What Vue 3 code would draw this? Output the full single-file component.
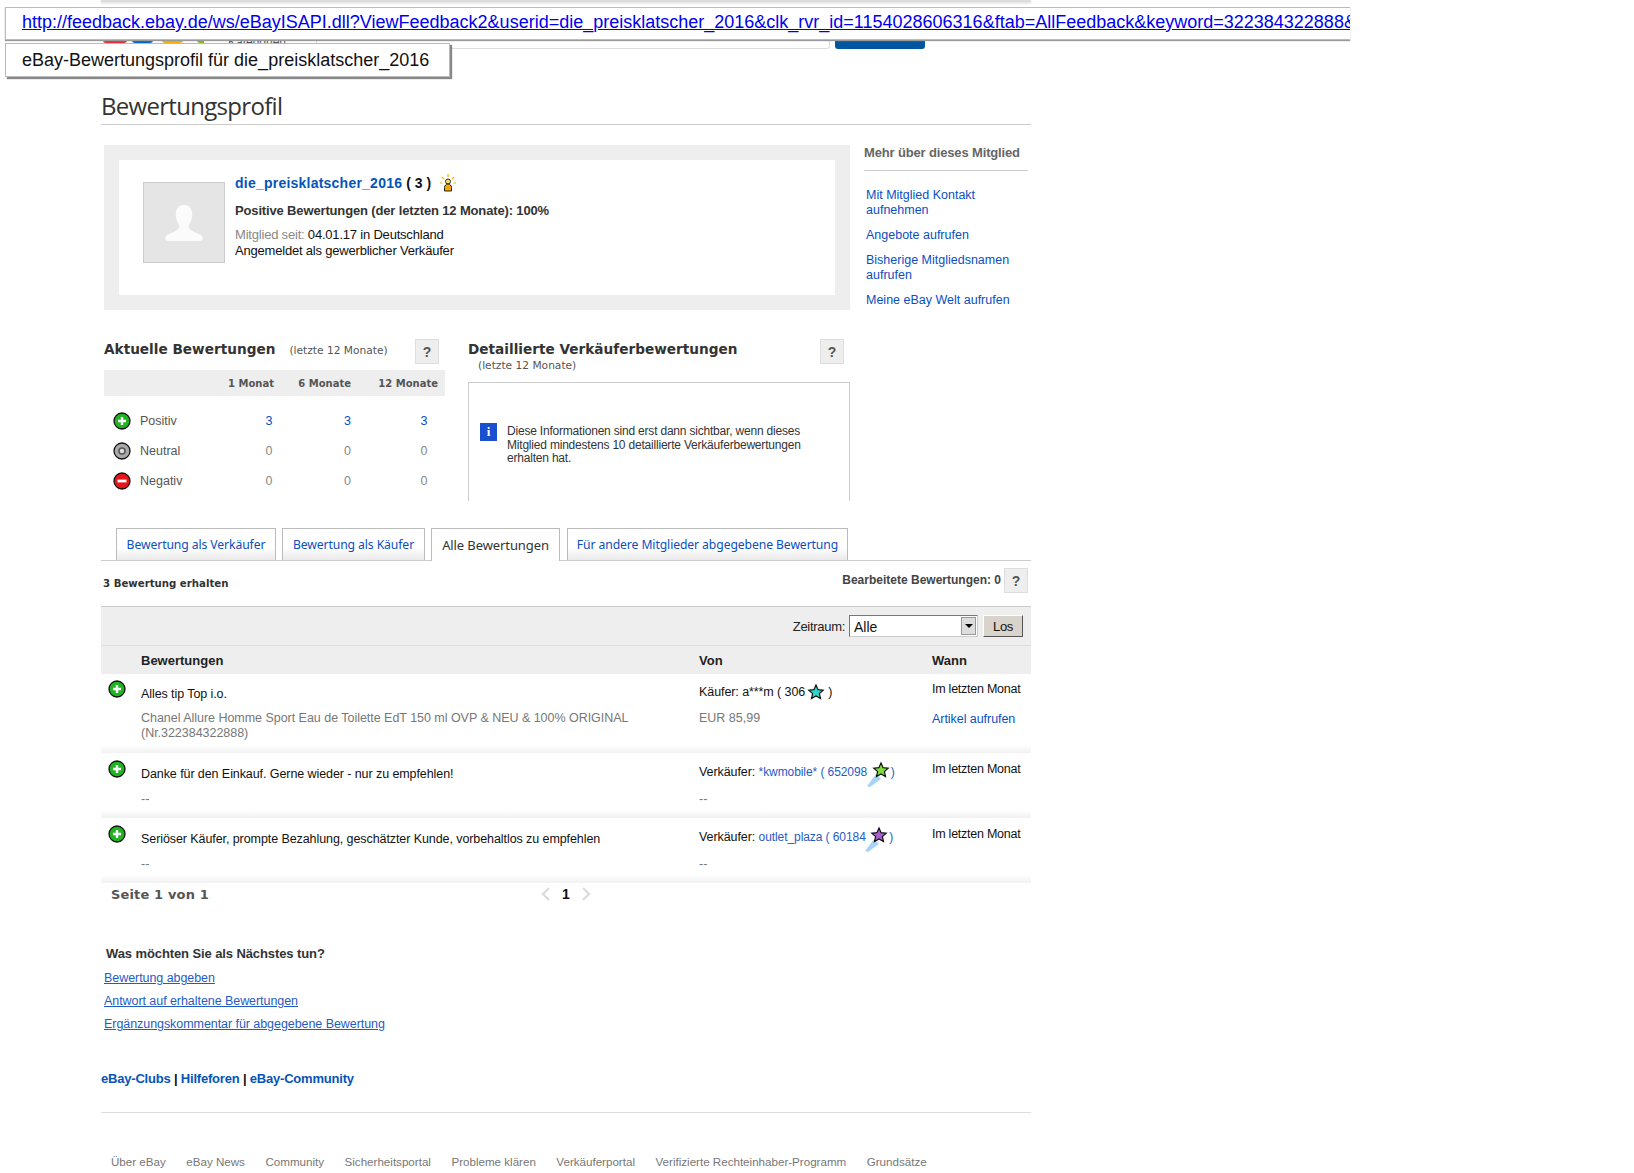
<script setup>
const rows = [
  { key: 'a', comment: 'Alles tip Top i.o.', item: 'Chanel Allure Homme Sport Eau de Toilette EdT 150 ml OVP & NEU & 100% ORIGINAL', item2: '(Nr.322384322888)', role: 'Käufer:', user: 'a***m', score: '306', link: false, color: '#2fd6c8', shooting: false, price: 'EUR 85,99', view: 'Artikel aufrufen', cls: 'row1' },
  { key: 'b', comment: 'Danke für den Einkauf. Gerne wieder - nur zu empfehlen!', item: '--', role: 'Verkäufer:', user: '*kwmobile*', score: '652098', link: true, color: '#7fdc3c', shooting: true, price: '--', cls: 'row2' },
  { key: 'c', comment: 'Seriöser Käufer, prompte Bezahlung, geschätzter Kunde, vorbehaltlos zu empfehlen', item: '--', role: 'Verkäufer:', user: 'outlet_plaza', score: '60184', link: true, color: '#a85fd0', shooting: true, price: '--', cls: 'row3' }
]
const summary = [
  { label: 'Positiv', kind: 'pos', vals: [3, 3, 3] },
  { label: 'Neutral', kind: 'neu', vals: [0, 0, 0] },
  { label: 'Negativ', kind: 'neg', vals: [0, 0, 0] }
]
const tabs = ['Bewertung als Verkäufer', 'Bewertung als Käufer', 'Alle Bewertungen', 'Für andere Mitglieder abgegebene Bewertung']
const footer = ['Über eBay', 'eBay News', 'Community', 'Sicherheitsportal', 'Probleme klären', 'Verkäuferportal', 'Verifizierte Rechteinhaber-Programm', 'Grundsätze']
const url = 'http://feedback.ebay.de/ws/eBayISAPI.dll?ViewFeedback2&userid=die_preisklatscher_2016&clk_rvr_id=1154028606316&ftab=AllFeedback&keyword=322384322888&sspagename=STRK'
</script>

<template>
  <div class="page">
    <div class="tip tip-url"><a class="tip-link">{{ url }}</a></div>
    <div class="tip tip-title">eBay-Bewertungsprofil für die_preisklatscher_2016</div>

    <div class="wrap">
      <header class="header">
        <div class="shadow"></div>
        <div class="head-row">
          <div class="logo"><i class="l-r"></i><i class="l-b"></i><i class="l-y"></i><i class="l-g"></i></div>
          <div class="cat">Kategorien</div>
          <div class="search"></div>
          <div class="search-btn"></div>
        </div>
      </header>

      <h1 class="title">Bewertungsprofil</h1>

      <section class="top">
        <div class="profile">
          <div class="profile-in">
            <div class="avatar">
              <svg width="42" height="38" viewBox="0 0 56 50"><path d="M28 1c8 0 11 6 11 13 0 6-3 11-5 15 0 3 3 6 10 9 6 2 9 4 9 7 0 3-2 4-5 4H8c-3 0-5-1-5-4 0-3 3-5 9-7 7-3 10-6 10-9-2-4-5-9-5-15C17 7 20 1 28 1z" fill="#fbfbfb"/></svg>
            </div>
            <div class="pinfo">
              <div class="pname"><a class="uname">die_preisklatscher_2016</a> <b>( 3 )</b>
                <svg class="sun" width="18" height="18" viewBox="0 0 18 18"><g stroke="#f5b400" stroke-width="1.2"><path d="M9 0v3M3 3l2 2M15 3l-2 2M1 9h2.500M17 9h-2.500"/></g><circle cx="9" cy="7.500" r="2.500" fill="#ffe27a" stroke="#222"/><path d="M5.500 17v-3.500c0-2 1.500-3.500 3.500-3.500s3.500 1.500 3.500 3.500V17z" fill="#f7a800" stroke="#222"/></svg>
              </div>
              <div class="ppos">Positive Bewertungen (der letzten 12 Monate): 100%</div>
              <div class="pmem"><span class="grey">Mitglied seit:</span> 04.01.17 in Deutschland</div>
              <div class="preg">Angemeldet als gewerblicher Verkäufer</div>
            </div>
          </div>
        </div>
        <aside class="side">
          <div class="side-h">Mehr über dieses Mitglied</div>
          <a class="slink s1">Mit Mitglied Kontakt<br>aufnehmen</a>
          <a class="slink">Angebote aufrufen</a>
          <a class="slink">Bisherige Mitgliedsnamen<br>aufrufen</a>
          <a class="slink">Meine eBay Welt aufrufen</a>
        </aside>
      </section>

      <section class="ratings">
        <div class="rleft">
          <div class="rhead">
            <h2 class="verd">Aktuelle Bewertungen</h2>
            <span class="small">(letzte 12 Monate)</span>
            <span class="help">?</span>
          </div>
          <div class="sumhead"><span></span><b>1 Monat</b><b>6 Monate</b><b>12 Monate</b></div>
          <div class="sumbody">
            <div v-for="s in summary" :key="s.label" class="sumrow">
              <span class="lab">
                <svg class="fb" width="18" height="18" viewBox="0 0 18 18">
                  <circle cx="9" cy="9" r="8" :fill="s.kind === 'pos' ? '#22b322' : s.kind === 'neg' ? '#e8141c' : '#a8a8a8'" stroke="#111" stroke-width="1.300"/>
                  <path v-if="s.kind === 'pos'" d="M9 5v8M5 9h8" stroke="#fff" stroke-width="2.400"/>
                  <path v-else-if="s.kind === 'neg'" d="M4.500 9h9" stroke="#fff" stroke-width="2.800"/>
                  <circle v-else cx="9" cy="9" r="3" fill="#ddd" stroke="#555" stroke-width="1.500"/>
                </svg>
                {{ s.label }}
              </span>
              <span v-for="(v, i) in s.vals" :key="i" class="num" :class="{ blue: v > 0, grey: v === 0 }">{{ v }}</span>
            </div>
          </div>
        </div>
        <div class="rright">
          <div class="rhead rhead2">
            <div>
              <h2 class="verd">Detaillierte Verkäuferbewertungen</h2>
              <div class="small small2">(letzte 12 Monate)</div>
            </div>
            <span class="help help2">?</span>
          </div>
          <div class="infobox">
            <span class="i-icon">i</span>
            <p>Diese Informationen sind erst dann sichtbar, wenn dieses<br>Mitglied mindestens 10 detaillierte Verkäuferbewertungen<br>erhalten hat.</p>
          </div>
        </div>
      </section>

      <nav class="tabs">
        <a v-for="(t, i) in tabs" :key="t" class="tab" :class="{ active: i === 2 }">{{ t }}</a>
      </nav>

      <div class="meta">
        <b class="meta-l">3 Bewertung erhalten</b>
        <span class="meta-r">Bearbeitete Bewertungen: 0</span>
        <span class="help help3">?</span>
      </div>

      <div class="filter">
        <span class="zeit">Zeitraum:</span>
        <span class="sel"><span class="sel-t">Alle</span><i class="sel-btn"></i></span>
        <span class="los">Los</span>
      </div>

      <div class="grid ghead"><span></span><b>Bewertungen</b><b>Von</b><b>Wann</b></div>

      <div v-for="r in rows" :key="r.key" class="grid frow" :class="r.cls">
        <svg class="fb ficon" width="18" height="18" viewBox="0 0 18 18"><circle cx="9" cy="9" r="8" fill="#22b322" stroke="#111" stroke-width="1.300"/><path d="M9 5v8M5 9h8" stroke="#fff" stroke-width="2.400"/></svg>
        <div>
          <div class="cmt">{{ r.comment }}</div>
          <div class="item">{{ r.item }}<template v-if="r.item2"><br>{{ r.item2 }}</template></div>
        </div>
        <div>
          <div class="from">
            {{ r.role }} <a v-if="r.link" class="flink">{{ r.user }}</a><template v-else>{{ r.user }}</template>
            <span :class="{ blue2: r.link }"> ( {{ r.score }}</span>
            <svg class="star" :class="{ shoot: r.shooting }" width="24" height="26" viewBox="0 0 24 26">
              <path v-if="r.shooting" d="M1 25 10 13l5 5L4 26z" fill="#a9d4f5"/>
              <path d="M15 2l2.100 4.700 5.100.5-3.800 3.400 1.100 5-4.500-2.600-4.500 2.600 1.100-5-3.800-3.400 5.100-.5z" :fill="r.color" stroke="#111" stroke-width="1.200"/>
            </svg>
            <span :class="{ blue2: r.link }">)</span>
          </div>
          <div class="price">{{ r.price }}</div>
        </div>
        <div>
          <div class="when">Im letzten Monat</div>
          <a v-if="r.view" class="view">{{ r.view }}</a>
        </div>
      </div>

      <div class="pager">
        <b class="pg-l">Seite 1 von 1</b>
        <span class="pg-c">
          <svg width="10" height="14" viewBox="0 0 10 14"><path d="M8 1 2 7l6 6" fill="none" stroke="#ddd" stroke-width="2.400"/></svg>
          <b>1</b>
          <svg width="10" height="14" viewBox="0 0 10 14"><path d="M2 1l6 6-6 6" fill="none" stroke="#ddd" stroke-width="2.400"/></svg>
        </span>
      </div>

      <section class="next">
        <h3>Was möchten Sie als Nächstes tun?</h3>
        <a>Bewertung abgeben</a>
        <a>Antwort auf erhaltene Bewertungen</a>
        <a>Ergänzungskommentar für abgegebene Bewertung</a>
      </section>

      <div class="clubs"><a>eBay-Clubs</a> | <a>Hilfeforen</a> | <a>eBay-Community</a></div>

      <footer class="foot">
        <a v-for="f in footer" :key="f">{{ f }}</a>
      </footer>
    </div>
  </div>
</template>

<style>
html, body { margin: 0; background: #fff; }
</style>

<style scoped>
.page { position: relative; width: 1634px; height: 1173px; overflow: hidden; font-family: "Liberation Sans", Arial, sans-serif; font-size: 13px; color: #111; background: #fff; }
a { color: #0a4fc0; text-decoration: none; }
.wrap { width: 930px; margin-left: 101px; }

.tip { position: absolute; left: 5px; z-index: 5; background: #fff; box-sizing: border-box; font-size: 18px; white-space: nowrap; overflow: hidden; border: 1px solid #bbb; }
.tip-url { top: 7px; width: 1345px; height: 33px; padding: 2px 0 0 16px; line-height: 24px; border-right: 0; box-shadow: 0 1px 1px #999; }
.tip-link { color: #0000ee; text-decoration: underline; }
.tip-title { top: 43px; width: 445px; height: 34px; padding: 4px 0 0 16px; line-height: 24px; color: #111; box-shadow: 2px 2px 1px #888; }

.header { position: relative; height: 49px; }
.shadow { height: 2px; background: #ddd; box-shadow: 0 1px 3px #ccc; }
.head-row { display: flex; align-items: flex-end; height: 47px; }
.logo { display: flex; width: 103px; height: 41px; padding-left: 2px; box-sizing: border-box; overflow: hidden; align-items: flex-end; align-self: flex-start; }
.logo i { display: block; height: 3px; border-radius: 0 0 12px 12px; flex: none; }
.l-r { width: 24px; background: #e53238; }
.l-b { width: 21px; margin-left: 5px; background: #0064d2; }
.l-y { width: 21px; margin-left: 9px; background: #f5af02; }
.l-g { width: 9px; margin-left: 14px; background: #86b817; }
.cat { width: 92px; height: 41px; margin-left: 20px; font-size: 12px; line-height: 81px; color: #555; padding-left: 4px; box-sizing: border-box; overflow: hidden; align-self: flex-start; }
.search { width: 514px; height: 10px; border: 1px solid #ddd; border-top: 0; box-sizing: border-box; border-radius: 0 0 3px 3px; }
.search-btn { width: 90px; height: 10px; margin-left: 5px; background: #00569f; border-radius: 0 0 3px 3px; }

.title { margin: 0; height: 76px; box-sizing: border-box; border-bottom: 1px solid #ccc; padding-top: 41px; font: 400 24px/32px "Open Sans", sans-serif; color: #333; letter-spacing: -0.7px; }

.top { display: flex; margin: 20px 0 0 3px; gap: 14px; height: 165px; }
.profile { width: 746px; box-sizing: border-box; padding: 15px; background: #eee; height: 165px; }
.profile-in { display: flex; background: #fff; height: 135px; padding: 22px 0 0 24px; box-sizing: border-box; }
.avatar { width: 82px; height: 81px; background: #e5e5e5; border: 1px solid #ccc; box-sizing: border-box; display: flex; justify-content: center; align-items: center; }
.pinfo { margin: -8px 0 0 10px; }
.pname { font-size: 14px; line-height: 18px; font-weight: 700; display: flex; align-items: center; gap: 4px; }
.uname { color: #0654ba; letter-spacing: 0.23px; }
.sun { margin-left: 4px; }
.ppos { margin-top: 10px; font-size: 13px; line-height: 18px; font-weight: 700; color: #333; letter-spacing: -0.15px; }
.pmem { margin-top: 7px; line-height: 16px; font-size: 13px; letter-spacing: -0.2px; }
.preg { line-height: 16px; letter-spacing: -0.2px; }
.grey { color: #888; }
.side { width: 164px; }
.side-h { height: 25px; border-bottom: 1px solid #ccc; font-weight: 700; color: #666; line-height: 15px; font-size: 13px; letter-spacing: -0.15px; }
.slink { display: block; margin: 10px 0 0 2px; line-height: 15px; font-size: 12.500px; color: #0a4fc0; }
.s1 { margin-top: 17px; }

.ratings { display: flex; gap: 22px; margin: 29px 0 0 2px; height: 162px; }
.rleft { width: 341px; margin-left: 1px; }
.rright { width: 382px; margin-left: 1px; }
.rhead { display: flex; align-items: flex-start; height: 31px; position: relative; }
.verd { margin: 0; font: 700 13.650px/20px "DejaVu Sans", sans-serif; color: #333; }
.small { font: 400 10.650px/14px "DejaVu Sans", sans-serif; color: #555; margin: 5px 0 0 14px; }
.small2 { margin: 0 0 0 10px; }
.help { display: inline-flex; align-items: center; justify-content: center; width: 24px; height: 25px; box-sizing: border-box; background: #eee; border: 1px solid #ddd; font-weight: 700; font-size: 14px; color: #555; flex: none; }
.rhead .help { margin-left: auto; margin-right: 6px; }
.rhead2 { height: 43px; }
.sumhead { display: grid; grid-template-columns: 94px 76px 77px 87px; height: 26px; background: #eee; align-items: center; font: 700 10px "DejaVu Sans", sans-serif; color: #555; text-align: right; }
.sumbody { padding-top: 10px; }
.sumrow { display: grid; grid-template-columns: 125px 80px 77px 76px; height: 30px; align-items: center; font-size: 12.500px; }
.lab { display: flex; align-items: center; gap: 9px; padding-left: 9px; color: #555; }
.num { text-align: center; }
.blue { color: #0a4fc0; }
.infobox { display: flex; align-items: flex-start; height: 119px; box-sizing: border-box; border: 1px solid #ccc; border-bottom: 0; padding: 40px 0 0 11px; }
.i-icon { width: 17px; height: 18px; background: #1a4fd0; color: #fff; font: 700 13px/18px "Liberation Serif", serif; text-align: center; flex: none; }
.infobox p { margin: 2px 0 0 10px; font-size: 12px; line-height: 13.500px; color: #333; letter-spacing: -0.2px; }

.tabs { display: flex; gap: 6px; margin-top: 27px; height: 32px; padding-left: 15px; border-bottom: 1px solid #ccc; }
.tab { box-sizing: border-box; height: 32px; padding: 7px 0 0; text-align: center; border: 1px solid #bbb; border-bottom: 0; background: linear-gradient(#fff 60%, #eaeaea); font: 400 12.200px/18px "Noto Sans", sans-serif; color: #0a4fc0; letter-spacing: -0.100px; white-space: nowrap; }
.tab:nth-child(1) { width: 160px; }
.tab:nth-child(2) { width: 143px; }
.tab:nth-child(3) { width: 129px; height: 33px; background: #fff; color: #333; font-size: 13px; }
.tab:nth-child(4) { width: 281px; margin-left: 1px; }

.meta { display: flex; align-items: flex-start; height: 45px; padding-right: 3px; }
.meta-l { font: 700 10.200px/12px "DejaVu Sans", sans-serif; color: #333; margin: 17px 0 0 2px; }
.meta-r { margin: 12px 3px 0 auto; font-weight: 700; font-size: 12px; line-height: 15px; color: #444; }
.help3 { margin-top: 7px; }

.filter { display: flex; align-items: center; justify-content: flex-end; height: 40px; box-sizing: border-box; border-top: 1px solid #ccc; border-bottom: 1px solid #ddd; background: #eee; padding-right: 8px; }
.zeit { font-size: 13px; color: #222; margin-right: 4px; letter-spacing: -0.3px; }
.sel { display: flex; align-items: center; justify-content: space-between; width: 129px; height: 22px; box-sizing: border-box; border: 1px solid #777; border-right-color: #ccc; border-bottom-color: #ccc; background: #fff; padding-left: 4px; font-size: 14px; margin-right: 5px; }
.sel-t { padding-top: 2px; }
.sel-btn { width: 15px; height: 18px; margin-right: 1px; background: #ddd; position: relative; border: 1px solid #999; box-sizing: border-box; }
.sel-btn::after { content: ""; position: absolute; left: 3px; top: 6px; border: 4px solid transparent; border-top-color: #000; border-bottom: 0; }
.los { width: 40px; height: 22px; line-height: 21px; text-align: center; box-sizing: border-box; background: #d8d4cc; border: 1px solid #fff; border-right-color: #555; border-bottom-color: #555; font-size: 13px; letter-spacing: -0.4px; }

.grid { display: grid; grid-template-columns: 40px 558px 233px 99px; }
.ghead { height: 28px; box-sizing: border-box; padding-top: 1px; background: #eee; align-items: center; font-size: 13px; }
.ghead b { color: #222; }
.frow { box-sizing: border-box; background: linear-gradient(#fff, #f1f1f1) left bottom / 100% 8px no-repeat; }
.row1 { height: 79px; padding-top: 5px; }
.row2, .row3 { height: 65px; padding-top: 6px; }
.ficon { margin: 1px 0 0 7px; }
.cmt { line-height: 16px; font-size: 12.500px; margin-top: 7px; color: #111; letter-spacing: -0.08px; }
.item { margin-top: 10px; line-height: 15px; font-size: 12.500px; color: #777; letter-spacing: -0.03px; }
.row1 .item { margin-top: 9px; }
.from { line-height: 16px; margin-top: 5px; font-size: 12.500px; height: 16px; white-space: nowrap; letter-spacing: -0.08px; }
.price { margin-top: 12px; line-height: 15px; font-size: 12.500px; color: #777; }
.row1 .price { margin-top: 11px; }
.flink, .blue2 { color: #1f5cc5; font-size: 12px; }
.star { vertical-align: 0.500px; margin: -10px 3px -13px -4px; }
.star.shoot { vertical-align: 2.500px; margin: -10px 1px -13px -1.500px; }
.when { font-size: 12.500px; line-height: 16px; margin-top: 2px; letter-spacing: -0.25px; white-space: nowrap; }
.view { display: block; margin-top: 14px; line-height: 16px; font-size: 12.500px; letter-spacing: -0.05px; }

.pager { display: flex; height: 22px; align-items: center; position: relative; }
.pg-l { font: 700 13px "DejaVu Sans", sans-serif; color: #555; margin-left: 10px; letter-spacing: 0.15px; }
.pg-c { display: flex; align-items: center; gap: 11px; position: absolute; left: 440px; }
.pg-c b { font-size: 14px; color: #111; }

.next { margin-top: 40px; padding-left: 3px; }
.next h3 { margin: 0 0 0 2px; font-size: 13px; line-height: 18px; color: #333; letter-spacing: -0.1px; }
.next a { display: block; margin-top: 5px; line-height: 18px; text-decoration: underline; font-size: 12.500px; color: #1f5cc5; letter-spacing: -0.06px; }
.next h3 + a { margin-top: 6px; }
.clubs { margin-top: 37px; height: 18px; line-height: 18px; font-weight: 700; font-size: 13px; letter-spacing: -0.2px; }
.clubs a { color: #0654ba; }
.foot { display: flex; gap: 20.500px; margin-top: 24px; padding: 40px 0 0 10px; border-top: 1px solid #ddd; font-size: 11.600px; line-height: 18px; }
.foot a { color: #777; white-space: nowrap; }
</style>
